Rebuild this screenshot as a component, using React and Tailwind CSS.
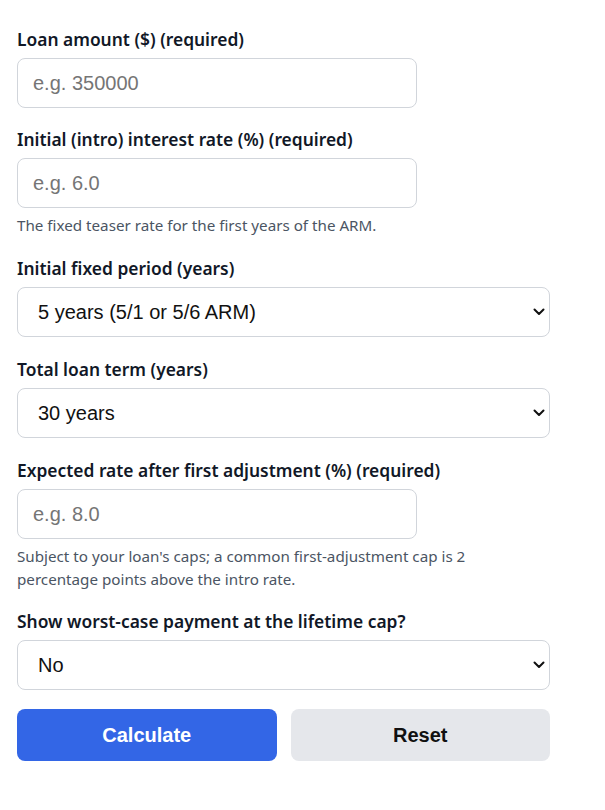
import { useState } from 'react'

const labelCls = 'block text-[17.4px] font-semibold leading-6 text-[#111827] mb-[7px]'
const inputCls =
  'block w-[400px] h-[50px] px-[15px] rounded-lg border border-[#d1d5db] bg-white text-[20px] text-[#111] placeholder-[#757575] focus:outline-none'
const hintCls = 'mt-[6px] text-[15.2px] leading-[23px] text-[#4b5563]'

function Chevron() {
  return (
    <svg
      className="pointer-events-none absolute right-[5px] top-1/2 -translate-y-1/2 w-[12px] h-[8px]"
      viewBox="0 0 12 8"
      fill="none"
    >
      <path d="M1.5 1.5 6 6l4.5-4.5" stroke="#111" strokeWidth="2" strokeLinecap="round" strokeLinejoin="round" />
    </svg>
  )
}

function Select({ value, onChange, options }) {
  return (
    <div className="relative w-[533px]">
      <select
        value={value}
        onChange={(e) => onChange(e.target.value)}
        className="block w-full h-[50px] pl-[20px] pr-8 appearance-none rounded-lg border border-[#d1d5db] bg-white text-[20px] text-[#111] focus:outline-none"
      >
        {options.map((o) => (
          <option key={o} value={o}>
            {o}
          </option>
        ))}
      </select>
      <Chevron />
    </div>
  )
}

export default function App() {
  const [amount, setAmount] = useState('')
  const [intro, setIntro] = useState('')
  const [period, setPeriod] = useState('5 years (5/1 or 5/6 ARM)')
  const [term, setTerm] = useState('30 years')
  const [after, setAfter] = useState('')
  const [worst, setWorst] = useState('No')

  const reset = () => {
    setAmount('')
    setIntro('')
    setPeriod('5 years (5/1 or 5/6 ARM)')
    setTerm('30 years')
    setAfter('')
    setWorst('No')
  }

  return (
    <div className="min-h-screen bg-white px-[17px] pt-[27px] font-['Noto_Sans',sans-serif]">
      <form onSubmit={(e) => e.preventDefault()} className="w-[533px]">
        <div className="mb-[19px]">
          <label className={labelCls}>Loan amount ($) (required)</label>
          <input
            value={amount}
            onChange={(e) => setAmount(e.target.value)}
            placeholder="e.g. 350000"
            className={`${inputCls} font-['Liberation_Sans',Arial,sans-serif]`}
          />
        </div>

        <div className="mb-[19px]">
          <label className={labelCls}>Initial (intro) interest rate (%) (required)</label>
          <input
            value={intro}
            onChange={(e) => setIntro(e.target.value)}
            placeholder="e.g. 6.0"
            className={`${inputCls} font-['Liberation_Sans',Arial,sans-serif]`}
          />
          <p className={hintCls}>The fixed teaser rate for the first years of the ARM.</p>
        </div>

        <div className="mb-5 font-['Liberation_Sans',Arial,sans-serif]">
          <label className={`${labelCls} font-['Noto_Sans',sans-serif]`}>Initial fixed period (years)</label>
          <Select
            value={period}
            onChange={setPeriod}
            options={['3 years (3/1 or 3/6 ARM)', '5 years (5/1 or 5/6 ARM)', '7 years (7/1 or 7/6 ARM)', '10 years (10/1 or 10/6 ARM)']}
          />
        </div>

        <div className="mb-5 font-['Liberation_Sans',Arial,sans-serif]">
          <label className={`${labelCls} font-['Noto_Sans',sans-serif]`}>Total loan term (years)</label>
          <Select value={term} onChange={setTerm} options={['15 years', '20 years', '30 years']} />
        </div>

        <div className="mb-[18px]">
          <label className={labelCls}>Expected rate after first adjustment (%) (required)</label>
          <input
            value={after}
            onChange={(e) => setAfter(e.target.value)}
            placeholder="e.g. 8.0"
            className={`${inputCls} font-['Liberation_Sans',Arial,sans-serif]`}
          />
          <p className={hintCls}>
            Subject to your loan's caps; a common first-adjustment cap is 2 percentage points above the intro rate.
          </p>
        </div>

        <div className="mb-[19px] font-['Liberation_Sans',Arial,sans-serif]">
          <label className={`${labelCls} font-['Noto_Sans',sans-serif]`}>Show worst-case payment at the lifetime cap?</label>
          <Select value={worst} onChange={setWorst} options={['No', 'Yes']} />
        </div>

        <div className="flex gap-[14px] font-['Liberation_Sans',Arial,sans-serif]">
          <button
            type="submit"
            className="flex-1 h-[52px] rounded-lg bg-[#3366e6] text-white text-[20px] font-bold"
          >
            Calculate
          </button>
          <button
            type="button"
            onClick={reset}
            className="flex-1 h-[52px] rounded-lg bg-[#e5e7eb] text-[#111] text-[20px] font-bold"
          >
            Reset
          </button>
        </div>
      </form>
    </div>
  )
}
